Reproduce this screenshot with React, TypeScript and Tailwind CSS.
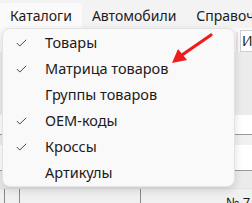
import React from "react";

const items = [
  { label: "Товары", checked: true },
  { label: "Матрица товаров", checked: true },
  { label: "Группы товаров", checked: false },
  { label: "ОЕМ-коды", checked: true },
  { label: "Кроссы", checked: true },
  { label: "Артикулы", checked: false },
];

function Check() {
  return (
    <svg width="11" height="8" viewBox="0 0 11 8" fill="none" stroke="#4a4a4a" strokeWidth={1}>
      <path d="M0.8 4l3 3L10.2 0.8" />
    </svg>
  );
}

export default function App() {
  return (
    <div
      className="relative w-[252px] h-[203px] overflow-hidden bg-[#f3f3f3] text-[#1b1b1b]"
      style={{ fontFamily: '"Noto Sans", "Open Sans", sans-serif' }}
    >
      {/* menu bar */}
      <div className="flex h-[28px] pt-[3px] text-[14px]">
        <div className="flex items-center px-[10px] bg-[#fafafa] rounded-t-[3px]">Каталоги</div>
        <div className="flex items-center px-[10px]">Автомобили</div>
        <div className="flex items-center px-[10px]">Справочники</div>
      </div>

      {/* window content behind the menu */}
      <div className="flex flex-col">
        <div className="flex h-[24px] items-end justify-end bg-[#f9f9f9]">
          <div className="w-[2px] h-[20px] bg-[#f6dede] mr-[2px]" />
          <div className="w-[12px] h-[22px] border border-[#d0d0d0] border-r-0 bg-white text-[14px] leading-[20px] pl-[1px]">И</div>
        </div>
        <div className="h-[63px] bg-[#ececec]" />
        <div className="h-[20px] bg-white border-b border-[#9a9a9a]" />
        <div className="h-[10px] bg-[#f0f0f0]" />
        <div className="h-[26px] bg-white border-b border-[#9a9a9a]" />
        <div className="h-[17px] bg-[#ebebeb]" />
        <div className="relative h-[15px] bg-[#f0f0f0] border-t border-[#e2e2e2]">
          <div className="absolute left-[4px] top-0 bottom-0 w-px bg-[#8a8a8a]" />
          <div className="absolute left-[19px] top-0 bottom-0 w-px bg-[#8a8a8a]" />
          <div className="absolute left-[140px] top-0 bottom-0 w-px bg-[#8a8a8a]" />
          <div className="absolute left-[226px] top-[7px] text-[13px] leading-none">№ 7</div>
        </div>
      </div>

      {/* dropdown */}
      <div className="absolute left-[2px] top-[28px] w-[233px] h-[159px] rounded-[8px] border border-[#e3e3e3] bg-[#f9f9f9] shadow-[0_3px_8px_rgba(0,0,0,0.14)] pt-[1px]">
        {items.map((it) => (
          <div key={it.label} className="flex items-center h-[26px] text-[14.5px]">
            <div className="w-[42px] flex justify-start pl-[13px]">{it.checked && <Check />}</div>
            <span>{it.label}</span>
          </div>
        ))}
      </div>

      {/* red arrow annotation */}
      <svg className="absolute left-0 top-0 pointer-events-none" width="252" height="203">
        <line x1="211" y1="35" x2="182" y2="55" stroke="#ee1c1c" strokeWidth="3.2" strokeLinecap="round" />
        <polygon points="172,63 178,49 187,60" fill="#ee1c1c" />
      </svg>
    </div>
  );
}
